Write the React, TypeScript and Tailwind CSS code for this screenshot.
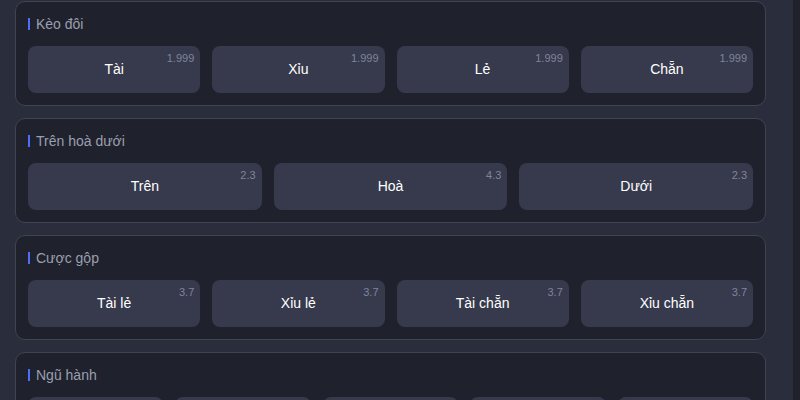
import React from "react";

interface Option {
  label: string;
  odds: string;
}

interface Group {
  title: string;
  cols: string;
  options: Option[];
}

const groups: Group[] = [
  {
    title: "Kèo đôi",
    cols: "grid-cols-4",
    options: [
      { label: "Tài", odds: "1.999" },
      { label: "Xỉu", odds: "1.999" },
      { label: "Lẻ", odds: "1.999" },
      { label: "Chẵn", odds: "1.999" },
    ],
  },
  {
    title: "Trên hoà dưới",
    cols: "grid-cols-3",
    options: [
      { label: "Trên", odds: "2.3" },
      { label: "Hoà", odds: "4.3" },
      { label: "Dưới", odds: "2.3" },
    ],
  },
  {
    title: "Cược gộp",
    cols: "grid-cols-4",
    options: [
      { label: "Tài lẻ", odds: "3.7" },
      { label: "Xỉu lẻ", odds: "3.7" },
      { label: "Tài chẵn", odds: "3.7" },
      { label: "Xỉu chẵn", odds: "3.7" },
    ],
  },
  {
    title: "Ngũ hành",
    cols: "grid-cols-5",
    options: [
      { label: "Kim", odds: "9.2" },
      { label: "Mộc", odds: "4.6" },
      { label: "Thuỷ", odds: "2.4" },
      { label: "Hoả", odds: "4.6" },
      { label: "Thổ", odds: "9.2" },
    ],
  },
];

const BetCard: React.FC<{ group: Group }> = ({ group }) => (
  <div className="rounded-[10px] border border-[#3f4352] bg-[#1f222c] px-3 pt-3 pb-3">
    <div className="flex h-5 items-center gap-[6px]">
      <span className="h-3 w-[2px] bg-[#4f6ef7]" />
      <span className="text-[14px] text-[#9a9fb0]">{group.title}</span>
    </div>
    <div className={`mt-3 grid gap-3 ${group.cols}`}>
      {group.options.map((opt) => (
        <button
          key={opt.label}
          className="relative flex h-[47px] items-center justify-center rounded-lg bg-[#363a4c] text-[14px] text-white"
        >
          {opt.label}
          <span className="absolute top-[4px] right-[6px] text-[11px] text-[#80849a]">
            {opt.odds}
          </span>
        </button>
      ))}
    </div>
  </div>
);

export default function App() {
  return (
    <div
      className="flex h-[400px] w-[800px] overflow-hidden bg-[#2a2d3b]"
      style={{ fontFamily: '"Liberation Sans", Arial, sans-serif' }}
    >
      <div className="flex-1 pt-px pl-[15px]">
        <div className="flex w-[751px] flex-col gap-3">
          {groups.map((g) => (
            <BetCard key={g.title} group={g} />
          ))}
        </div>
      </div>
      <div className="w-[7px] bg-[#1f212b]" />
    </div>
  );
}
